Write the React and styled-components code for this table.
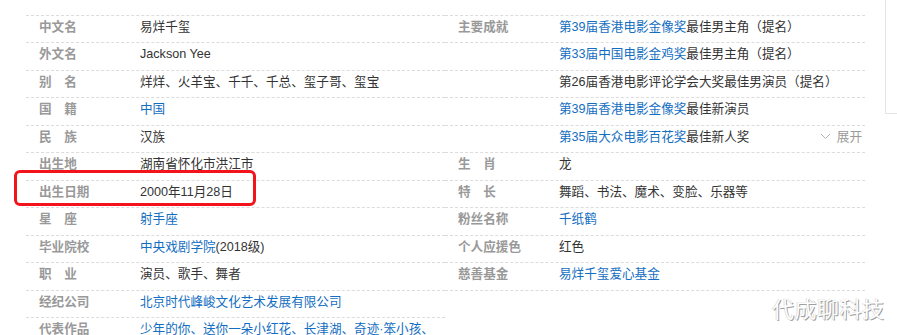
import React from "react";
import styled, { createGlobalStyle } from "styled-components";

const GlobalStyle = createGlobalStyle`
  html, body {
    margin: 0;
    padding: 0;
    background: #ffffff;
  }
  body {
    font-family: "Liberation Sans", Arial, "Noto Sans CJK SC", sans-serif;
  }
`;

const leftRows = [
  { label: "中文名", value: [["易烊千玺"]] },
  { label: "外文名", value: [["Jackson Yee"]] },
  { label: "别\u3000名", value: [["烊烊、火羊宝、千千、千总、玺子哥、玺宝"]] },
  { label: "国\u3000籍", value: [["中国", true]] },
  { label: "民\u3000族", value: [["汉族"]] },
  { label: "出生地", value: [["湖南省怀化市洪江市"]] },
  { label: "出生日期", value: [["2000年11月28日"]] },
  { label: "星\u3000座", value: [["射手座", true]] },
  { label: "毕业院校", value: [["中央戏剧学院", true], ["(2018级)"]] },
  { label: "职\u3000业", value: [["演员、歌手、舞者"]] },
  { label: "经纪公司", value: [["北京时代峰峻文化艺术发展有限公司", true]] },
  { label: "代表作品", value: [["少年的你、送你一朵小红花、长津湖、奇迹·笨小孩、", true]] },
];

const rightRows = [
  { label: "主要成就", value: [["第39届香港电影金像奖", true], ["最佳男主角（提名）"]] },
  { label: "", value: [["第33届中国电影金鸡奖", true], ["最佳男主角（提名）"]] },
  { label: "", value: [["第26届香港电影评论学会大奖最佳男演员（提名）"]] },
  { label: "", value: [["第39届香港电影金像奖", true], ["最佳新演员"]] },
  { label: "", value: [["第35届大众电影百花奖", true], ["最佳新人奖"]], more: true },
  { label: "生\u3000肖", value: [["龙"]] },
  { label: "特\u3000长", value: [["舞蹈、书法、魔术、变脸、乐器等"]] },
  { label: "粉丝名称", value: [["千纸鹤", true]] },
  { label: "个人应援色", value: [["红色"]] },
  { label: "慈善基金", value: [["易烊千玺爱心基金", true]] },
  { label: "", value: [] },
];

const Page = styled.div`
  position: relative;
  display: flex;
  align-items: flex-start;
  width: 897px;
  height: 335px;
  overflow: hidden;
  padding-left: 26px;
  box-sizing: border-box;
`;

const Info = styled.div`
  display: flex;
  width: 839px;
  padding-top: 15px;
`;

const Column = styled.dl`
  margin: 0;
  width: ${(p) => p.$width}px;
  border-bottom: ${(p) => (p.$closed ? "1px dashed #dcdcdc" : "none")};
`;

const Row = styled.div`
  display: flex;
  align-items: center;
  height: 27px;
  box-sizing: border-box;
  border-top: 1px dashed #dcdcdc;
  padding-left: 13px;
  padding-bottom: 5px;
  font-size: 12.6px;
  line-height: 16px;
  white-space: nowrap;

  &:nth-child(even) {
    height: 28px;
  }
`;

const Label = styled.dt`
  width: 101px;
  flex: none;
  color: #999999;
  font-weight: bold;
`;

const Value = styled.dd`
  margin: 0;
  flex: 1;
  color: #333333;
`;

const Link = styled.a`
  color: #136ec2;
  text-decoration: none;
`;

const More = styled.span`
  display: flex;
  align-items: center;
  gap: 6px;
  color: #999999;
  margin-right: 3px;
`;

const SideBox = styled.div`
  margin-left: 20px;
  width: 12px;
  height: 113px;
  flex: none;
  border-left: 1px solid #e4e4e4;
  border-bottom: 1px solid #e4e4e4;
`;

const Highlight = styled.div`
  position: absolute;
  left: 14px;
  top: 170px;
  width: 242px;
  height: 36px;
  box-sizing: border-box;
  border: 3px solid #f2141a;
  border-radius: 6px;
`;

const Watermark = styled.div`
  position: absolute;
  left: 772px;
  top: 291px;
  font-family: "Noto Sans CJK SC", sans-serif;
  font-size: 22px;
  letter-spacing: 0.5px;
  color: #ffffff;
  text-shadow: 1px 1px 0 #a0a0a0, -0.5px -0.5px 0 #c8c8c8;
`;

const renderValue = (parts) =>
  parts.map(([text, link], i) =>
    link ? <Link key={i}>{text}</Link> : <span key={i}>{text}</span>
  );

const Chevron = () => (
  <svg width="11" height="7" viewBox="0 0 11 7">
    <polyline points="1,1 5.5,5.5 10,1" fill="none" stroke="#b3b3b3" strokeWidth="1" />
  </svg>
);

const InfoColumn = ({ rows, width, closed }) => (
  <Column $width={width} $closed={closed}>
    {rows.map((row, i) => (
      <Row key={i}>
        <Label>{row.label}</Label>
        <Value>{renderValue(row.value)}</Value>
        {row.more && (
          <More>
            <Chevron />
            展开
          </More>
        )}
      </Row>
    ))}
  </Column>
);

export default function App() {
  return (
    <>
      <GlobalStyle />
      <Page>
        <Info>
          <InfoColumn rows={leftRows} width={419} />
          <InfoColumn rows={rightRows} width={420} closed />
        </Info>
        <SideBox />
        <Highlight />
        <Watermark>代成聊科技</Watermark>
      </Page>
    </>
  );
}
